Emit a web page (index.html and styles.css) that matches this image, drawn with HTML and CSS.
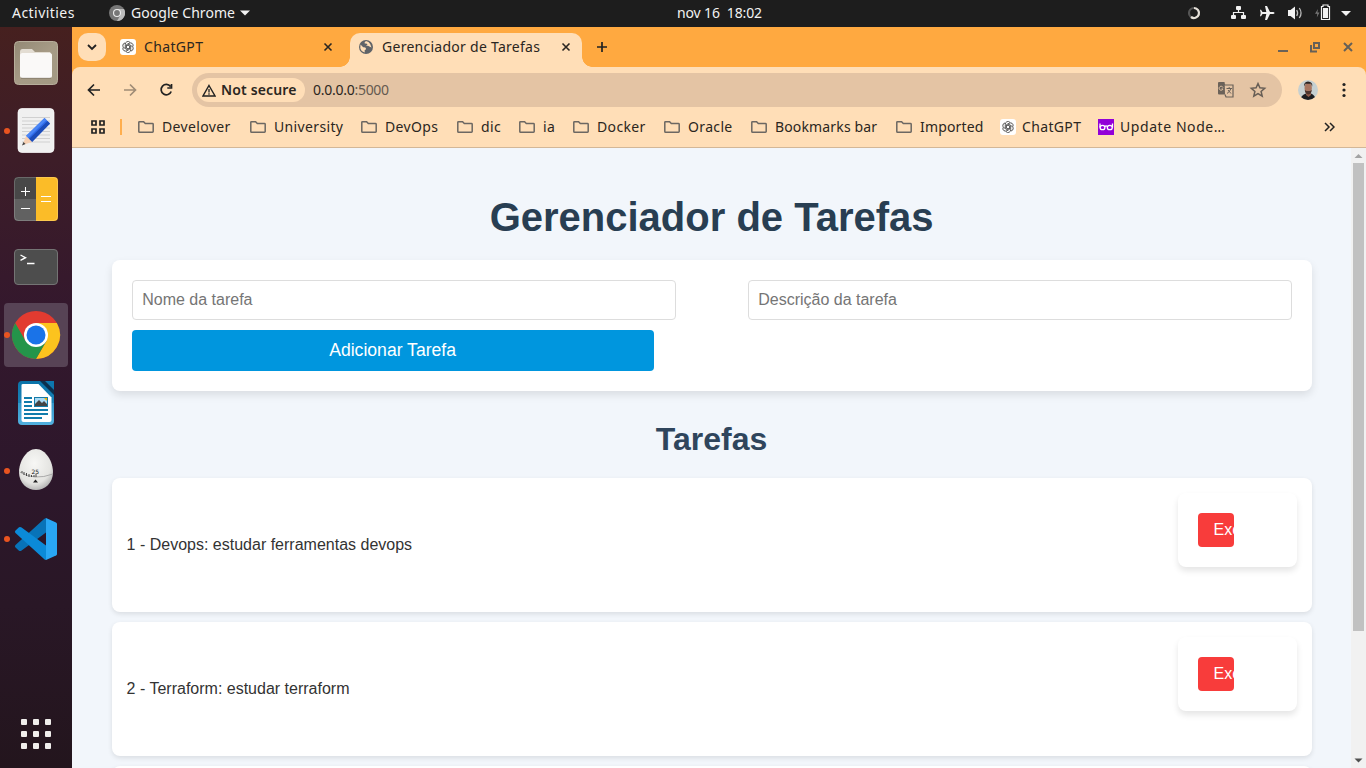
FILE: index.html
```html
<!DOCTYPE html>
<html lang="pt-BR">
<head>
<meta charset="utf-8">
<title>Gerenciador de Tarefas</title>
<link rel="stylesheet" href="styles.css">
</head>
<body>
<svg class="defs" width="0" height="0">
  <symbol id="folder" viewBox="0 0 16 14"><path d="M.8 11.4V2.4Q.8 1.7 1.5 1.7H5.6L7.3 3.5H14.4Q15.2 3.5 15.2 4.2V11.6Q15.2 12.3 14.5 12.3H1.6Q.8 12.3 .8 11.4Z" fill="none" stroke="#6c6762" stroke-width="1.5"/></symbol>
  <symbol id="gpt" viewBox="0 0 16 16"><rect width="16" height="16" rx="3" fill="#fff"/><g fill="none" stroke="#333" stroke-width=".75"><g id="petal"><path d="M8 6.1L10.7 7.6V10.8Q10.7 12.6 9 13.4Q7.3 14 6 12.6"/></g><use href="#petal" transform="rotate(60 8 8)"/><use href="#petal" transform="rotate(120 8 8)"/><use href="#petal" transform="rotate(180 8 8)"/><use href="#petal" transform="rotate(240 8 8)"/><use href="#petal" transform="rotate(300 8 8)"/></g></symbol>
  <symbol id="cross" viewBox="0 0 10 10"><path d="M1.5 1.5L8.5 8.5M8.500 1.500L1.500 8.500" stroke="currentColor" stroke-width="1.600"/></symbol>
</svg>

<header class="topbar">
  <span class="activities">Activities</span>
  <svg class="app-icon" width="16" height="16" viewBox="0 0 16 16"><circle cx="8" cy="8" r="8" fill="#777"/><path d="M8 4H15A8 8 0 0 1 8 16L11.5 10Z" fill="#bbb"/><circle cx="8" cy="8" r="4" fill="#eee"/><circle cx="8" cy="8" r="2.9" fill="#777"/></svg>
  <span class="app-name">Google Chrome</span>
  <svg class="app-caret" width="10" height="6"><path d="M0 .5H10L5 5.5Z" fill="#f2f2f2"/></svg>
  <span class="clock">nov 16&nbsp; 18:02</span>
  <svg class="tray" width="170" height="26" viewBox="1186 0 170 26" fill="#f2f2f2">
    <circle cx="1194" cy="13" r="5" fill="none" stroke="#555" stroke-width="2.2"/><path d="M1194 8A5 5 0 1 1 1191 17" fill="none" stroke="#e5e0d8" stroke-width="2.2"/>
    <rect x="1236" y="6" width="5" height="4" rx="1"/><rect x="1231" y="15" width="5" height="4" rx="1"/><rect x="1241" y="15" width="5" height="4" rx="1"/><path d="M1238.500 9V12.500M1233.500 15.500V12.500H1243.500V15.500" fill="none" stroke="#f2f2f2" stroke-width="1.200"/>
    <path d="M1265 6H1267L1270 12H1273Q1274.500 12.200 1274.500 13T1273 14H1270L1267 20H1265L1266.300 14H1262.500L1261 16.300H1260L1260.700 13L1260 9.700H1261L1262.500 12H1266.300Z"/>
    <path d="M1288 10H1290.500L1295 6.500V19.500L1290.500 16H1288Z"/><path d="M1296.700 10Q1298.500 13 1296.700 16M1299.300 8Q1302.800 13 1299.300 18" fill="none" stroke="#bbb" stroke-width="1.300"/>
    <path d="M1318 9L1315 13.800H1317.300L1316.800 17.500L1319.500 12.600H1317.400Z" fill="#777"/><path d="M1323 5H1328V6.500H1329.500V19.500H1321.500V6.500H1323Z" fill="none" stroke="#f2f2f2" stroke-width="1.200"/><rect x="1323" y="8" width="5" height="10"/>
    <path d="M1341 11H1351L1346 16Z"/>
  </svg>
</header>

<div class="desktop">
  <nav class="dock">
    <div class="launcher"><svg viewBox="0 0 64 64"><defs><linearGradient id="fg" x2="1" y2="1"><stop stop-color="#938975"/><stop offset=".5" stop-color="#a69b86"/><stop offset="1" stop-color="#a39983"/></linearGradient></defs><rect x="10.500" y="10.500" width="43" height="43" rx="4" fill="url(#fg)" stroke="#b7ae9b"/><path d="M16 30V21Q16 18 18.500 18H28L31 21H46L48 24V30Z" fill="#e3ddd3"/><rect x="16" y="22" width="32" height="25" rx="2.500" fill="#faf9f8"/><path d="M17 47.300H47" stroke="#7e7565" stroke-width=".7"/></svg></div>
    <div class="launcher"><i class="dot"></i><svg viewBox="0 0 64 64"><rect x="14" y="9.500" width="36" height="44" rx="4" fill="#f0f0f0" stroke="#fff" stroke-width=".7"/><path d="M18 18.500H46M18 22H46M18 25.500H46M18 29H46M18 32.500H46M18 36H46M18 39.500H46M18 43H46" stroke="#d0d0d0"/><path d="M40.500 19L46 24.500L28 43L22 37Z" fill="#2f6cea"/><path d="M43.500 22L46 24.500L28 43L25 40Z" fill="#1c4cb8"/><path d="M40.500 19L42.500 21L24 39L22 37Z" fill="#4b86f5"/><path d="M22 37L28 43L18.500 46Z" fill="#f6cfb2"/><path d="M19.500 43L18 46.500L21.500 45Z" fill="#444"/></svg></div>
    <div class="launcher"><svg viewBox="0 0 64 64"><defs><clipPath id="cc"><rect x="10" y="10" width="44" height="44" rx="4"/></clipPath></defs><g clip-path="url(#cc)"><path d="M10 10H32V32H10Z" fill="#484848"/><path d="M10 32H32V54H10Z" fill="#616161"/><path d="M32 10H54V54H32Z" fill="#fbbc28"/></g><rect x="10.500" y="10.500" width="43" height="43" rx="4" fill="none" stroke="#fff" opacity=".18"/><path d="M17 24.500H26M21.500 20V29M17 41.500H26M37 29.500H47M37 34.500H47" stroke="#fff"/></svg></div>
    <div class="launcher"><svg viewBox="0 0 64 64"><rect x="10.500" y="14.500" width="43" height="35" rx="3.500" fill="#4d4d4d" stroke="#747474"/><path d="M16.500 20L21.500 22.700L16.500 25.300M23 28.500H30.500" fill="none" stroke="#fff" stroke-width="1.400"/></svg></div>
    <div class="launcher active"><i class="dot"></i><svg viewBox="0 0 64 64"><circle cx="32" cy="32" r="24" fill="#e23b30"/><path d="M32 20H52.800A24 24 0 0 1 32 56L42.400 38Z" fill="#fcc31e"/><path d="M11.200 20A24 24 0 0 0 32 56L42.400 38L21.600 38Z" fill="#24954a"/><circle cx="32" cy="32" r="12" fill="#fff"/><circle cx="32" cy="32" r="9.500" fill="#1a73e8"/></svg></div>
    <div class="launcher"><svg viewBox="0 0 64 64"><defs><linearGradient id="wg" x2="0" y2="1"><stop stop-color="#0a72a8"/><stop offset=".5" stop-color="#1b83b8"/><stop offset=".5" stop-color="#3298ca"/><stop offset="1" stop-color="#52b0df"/></linearGradient></defs><path d="M14 14Q14 10 18 10H38L50 22V50Q50 54 46 54H18Q14 54 14 50Z" fill="url(#wg)"/><path d="M17.500 14Q17.500 13 19 13H34.500L47.500 26.500V49Q47.500 51 45.500 51H19.500Q17.500 51 17.500 49Z" fill="#fff"/><path d="M36 10H41L50 19V24Z" fill="#0b2f4d"/><path d="M41 10H50V19Z" fill="#0d77ae"/><path d="M20 27H28M20 31H28M20 35H28M20 39H44M20 43H44M20 47H38" stroke="#117cac" stroke-width="1.800"/><rect x="30.500" y="26.500" width="13" height="9" fill="#a9daf4" stroke="#167ba8"/><path d="M31 35V33L35 29L38 32L40 30L43 33V35Z" fill="#444"/><path d="M40 27H43V30Z" fill="#f2b400"/></svg></div>
    <div class="launcher"><i class="dot"></i><svg viewBox="0 0 64 64"><defs><radialGradient id="eg" cx=".45" cy=".35" r=".7"><stop stop-color="#f7f7f5"/><stop offset=".7" stop-color="#e4e4e1"/><stop offset="1" stop-color="#aaa"/></radialGradient></defs><path d="M32 10C42 10 49 23 49 33C49 44 41 51 32 51S15 44 15 33C15 23 22 10 32 10Z" fill="url(#eg)"/><path d="M15.500 33Q30 42 49 35" fill="none" stroke="#aaa"/><path d="M18 32V34M20 33V36M22.500 34V37M25 35V38M27.500 36V38M30 36V38M32 35V38" stroke="#222" stroke-width=".8"/><path d="M29 43.500L31.500 40.500L34 43.500Z" fill="#222"/><text x="27.500" y="35" class="egg-number">25</text></svg></div>
    <div class="launcher"><i class="dot"></i><svg viewBox="0 0 64 64"><path d="M11.500 38Q10.200 39.300 11.500 40.500L15 43.700Q16.300 44.500 17.600 43.500L42 25.500V11Q41 11 39.500 12.500Z" fill="#0873b8"/><path d="M11.500 26Q10.200 24.700 11.500 23.500L15 20.300Q16.300 19.500 17.600 20.500L42 38.500V53Q41 53 39.500 51.500Z" fill="#0b8ad8"/><path d="M42 11L52 15.500Q53 16 53 17V47Q53 48 52 48.500L42 53Z" fill="#29a7f4"/></svg></div>
    <div class="launcher apps"><svg viewBox="0 0 64 64" fill="#f0eeec"><rect x="17" y="17" width="6" height="6" rx="1"/><rect x="29" y="17" width="6" height="6" rx="1"/><rect x="41" y="17" width="6" height="6" rx="1"/><rect x="17" y="29" width="6" height="6" rx="1"/><rect x="29" y="29" width="6" height="6" rx="1"/><rect x="41" y="29" width="6" height="6" rx="1"/><rect x="17" y="41" width="6" height="6" rx="1"/><rect x="29" y="41" width="6" height="6" rx="1"/><rect x="41" y="41" width="6" height="6" rx="1"/></svg></div>
  </nav>

  <div class="browser">
    <div class="tabstrip">
      <div class="tab-search"><svg width="10" height="7"><path d="M1 1L5 5L9 1" fill="none" stroke="#222" stroke-width="1.800"/></svg></div>
      <div class="tab"><svg width="16" height="16"><use href="#gpt"/></svg><span class="t-chatgpt">ChatGPT</span><svg class="close" width="10" height="10"><use href="#cross"/></svg></div>
      <div class="tab current"><svg width="16" height="16" viewBox="0 0 16 16"><circle cx="8" cy="8" r="7" fill="#5f6368"/><path d="M2.500 5.500L5.200 8.300Q7.500 8 8 9.500Q8 11 6.700 11V13.500Q3 12.500 2.300 9ZM8 2Q6 3.200 6.700 4.500Q9 4 9.500 5.500L8 6.800H10Q12 8 13.500 8.500Q13 5 10.500 3Z" fill="#ffdeb7"/></svg><span class="t-current">Gerenciador de Tarefas</span><svg class="close" width="10" height="10"><use href="#cross"/></svg></div>
      <svg class="new-tab" width="12" height="12"><path d="M6 1V11M1 6H11" stroke="#222" stroke-width="1.700"/></svg>
      <svg class="window-controls" width="78" height="16" viewBox="0 0 78 16"><path d="M1 12H11" stroke="#6b6257" stroke-width="2"/><path d="M37 4H42V9H37ZM34 6V12.500H40" fill="none" stroke="#666057" stroke-width="2"/><path d="M67 4L75 12M75 4L67 12" stroke="#666057" stroke-width="2"/></svg>
    </div>
    <div class="chrome">
      <div class="toolbar">
        <svg class="nav-icons" width="90" height="16" viewBox="0 0 90 16" fill="none" stroke-width="1.700"><path d="M13 8H2M7 2.500L1.500 8L7 13.500" stroke="#222"/><path d="M37 8H48M43 2.500L48.500 8L43 13.500" stroke="#a08c76"/><path d="M83.500 4.500A5.200 5.200 0 1 0 84.200 9.500M84.500 2V6H80.300" stroke="#222"/></svg>
        <div class="address">
          <div class="security"><svg width="14" height="13" viewBox="0 0 14 13"><path d="M7 1.500L13 12H1Z" fill="none" stroke="#222" stroke-width="1.400"/><path d="M7 5V8.500M7 9.300V10.700" stroke="#222" stroke-width="1.300"/></svg><span>Not secure</span></div>
          <span class="url">0.0.0.0<span class="port">:5000</span></span>
          <svg class="address-icons" width="52" height="18" viewBox="0 0 52 18"><path d="M2 1H7.500L10 13.500H2Q1 13.500 1 12.500V2Q1 1 2 1Z" fill="#6b6259"/><path d="M7.800 4H16V16H9L8 13.500" fill="#e4c4a4" stroke="#6b6259" stroke-width="1.200"/><path d="M6 6.500A2 2 0 1 0 6 8H4.500" fill="none" stroke="#e4c4a4"/><path d="M9.500 7.500H15M12.200 6V7.500M14 7.500Q13 10.500 10 12.500M11 9L14 12.500" fill="none" stroke="#6b6259"/><path d="M41 2.500L42.900 6.800L47.700 7.300L44.100 10.400L45.200 15.100L41 12.600L36.800 15.100L37.900 10.400L34.300 7.300L39.100 6.800Z" fill="none" stroke="#675e55" stroke-width="1.500"/></svg>
        </div>
        <svg class="avatar" width="20" height="20" viewBox="0 0 20 20"><defs><clipPath id="ac"><circle cx="10" cy="10" r="10"/></clipPath></defs><g clip-path="url(#ac)"><path d="M0 0H20V20H0Z" fill="#c6d0d1"/><path d="M2 20Q3 15 8 13.500H13Q17 15 18 20Z" fill="#1d1d20"/><path d="M8 12H13V15L10.500 17L8 15Z" fill="#8e5c49"/><ellipse cx="10.200" cy="8" rx="3.700" ry="5.500" fill="#a87660"/><path d="M6.200 6.500Q5.500 2 10 1.500Q15 2 14.200 6.500L13 3.800H7.500Z" fill="#2b2423"/><path d="M6.800 10L8.500 11H12L13.800 10Q13.500 14 10.300 14.500Q7 14 6.800 10Z" fill="#4e352d"/></g></svg>
        <svg class="menu" width="4" height="16" fill="#222"><circle cx="2" cy="2.500" r="1.600"/><circle cx="2" cy="8" r="1.600"/><circle cx="2" cy="13.500" r="1.600"/></svg>
      </div>
      <div class="bookmarks">
        <svg width="14" height="14" fill="none" stroke="#222" stroke-width="1.700"><path d="M1 1H5V5H1ZM9 1H13V5H9ZM1 9H5V13H1ZM9 9H13V13H9Z"/></svg>
        <span class="divider"></span>
        <div class="bookmark-list">
          <span class="bm"><svg width="16" height="14"><use href="#folder"/></svg><b>Develover</b></span>
          <span class="bm"><svg width="16" height="14"><use href="#folder"/></svg><b>University</b></span>
          <span class="bm"><svg width="16" height="14"><use href="#folder"/></svg><b>DevOps</b></span>
          <span class="bm"><svg width="16" height="14"><use href="#folder"/></svg><b>dic</b></span>
          <span class="bm"><svg width="16" height="14"><use href="#folder"/></svg><b>ia</b></span>
          <span class="bm"><svg width="16" height="14"><use href="#folder"/></svg><b>Docker</b></span>
          <span class="bm"><svg width="16" height="14"><use href="#folder"/></svg><b>Oracle</b></span>
          <span class="bm tight"><svg width="16" height="14"><use href="#folder"/></svg><b>Bookmarks bar</b></span>
          <span class="bm tight"><svg width="16" height="14"><use href="#folder"/></svg><b>Imported</b></span>
          <span class="bm site"><svg width="16" height="16"><use href="#gpt"/></svg><b>ChatGPT</b></span>
          <span class="bm site wide"><svg width="16" height="16" viewBox="0 0 16 16"><path d="M0 0H16V16H0Z" fill="#9200d8"/><path d="M2 4.500V8.500M14.500 4.500V8.500" stroke="#fff" stroke-width="1.300"/><ellipse cx="4.500" cy="8.500" rx="2.400" ry="2.200" fill="none" stroke="#fff" stroke-width="1.300"/><ellipse cx="11.800" cy="8.500" rx="2.500" ry="2.200" fill="none" stroke="#fff" stroke-width="1.300"/><path d="M6.700 7.500Q8 6.300 9.500 7.500" fill="none" stroke="#fff" stroke-width="1.300"/></svg><b>Update Node…</b></span>
        </div>
        <svg class="more" width="11" height="10" fill="none" stroke="#222" stroke-width="1.500"><path d="M1 1L5 5L1 9M6 1L10 5L6 9"/></svg>
      </div>
    </div>

    <div class="viewport">
      <main class="page">
        <h1>Gerenciador de Tarefas</h1>
        <form class="card task-form">
          <input type="text" placeholder="Nome da tarefa">
          <input type="text" placeholder="Descrição da tarefa">
          <button type="button" class="add">Adicionar Tarefa</button>
        </form>
        <h2>Tarefas</h2>
        <ul class="tasks">
          <li class="task"><span>1 - Devops: estudar ferramentas devops</span><form class="card remove-form"><button type="button" class="remove">Excluir</button></form></li>
          <li class="task"><span>2 - Terraform: estudar terraform</span><form class="card remove-form"><button type="button" class="remove">Excluir</button></form></li>
          <li class="task"></li>
        </ul>
      </main>
      <div class="scrollbar"><svg width="15" height="15"><path d="M3.500 10H11.500L7.500 6Z" fill="#a3a3a3"/></svg><div class="thumb"></div><svg width="15" height="15"><path d="M3.500 5.500H11.500L7.500 9.500Z" fill="#505050"/></svg></div>
    </div>
  </div>
</div>
</body>
</html>
```
FILE: styles.css
```css
* { box-sizing: border-box; }
body { margin: 0; width: 1366px; height: 768px; overflow: hidden; display: flex; flex-direction: column; font: 14px/20px "Noto Sans", sans-serif; color: #2b2621; }
svg { display: block; flex: none; }
.defs { position: absolute; }
.topbar { height: 27px; flex: none; background: #1d1d1d; color: #f2f2f2; display: flex; align-items: center; padding: 0 10px 1px 12px; white-space: nowrap; }
.activities { width: 97px; letter-spacing: .45px; }
.app-name { margin-left: 6px; width: 109px; letter-spacing: .05px; }
.app-icon { flex: none; }
.clock { margin-left: 427px; width: 86px; letter-spacing: -.13px; }
.tray { margin-left: auto; }

.desktop { display: flex; flex: 1; min-height: 0; }
.dock { width: 72px; flex: none; padding: 4px; display: flex; flex-direction: column; gap: 4px; background: linear-gradient(#46201f 0%, #3d1d28 18%, #34182d 38%, #2d172b 60%, #291726 78%, #23151d 100%); }
.launcher { position: relative; width: 64px; height: 64px; flex: none; border-radius: 4px; }
.launcher svg { width: 64px; height: 64px; }
.launcher.active { background: #574355; }
.dot { position: absolute; left: 0; top: 29px; width: 6px; height: 6px; border-radius: 50%; background: #e95420; }
.apps { margin-top: auto; margin-bottom: -2px; }
.egg-number { font: 6px "DejaVu Sans", sans-serif; fill: #222; }

.browser { flex: 1; min-width: 0; display: flex; flex-direction: column; background: #ffa940; }
.tabstrip { height: 40px; flex: none; display: flex; align-items: center; padding-left: 6px; }
.tab-search { width: 28px; height: 28px; border-radius: 10px; background: #ffdeb7; display: flex; align-items: center; justify-content: center; }
.tab { width: 230px; margin-left: 6px; padding: 0 9px 0 8px; height: 34px; display: flex; align-items: center; gap: 8px; white-space: nowrap; }
.tab .close { margin-left: auto; }
.t-chatgpt { letter-spacing: .35px; }
.t-current { letter-spacing: .27px; }
.tab.current { position: relative; width: 232px; height: 34px; margin: 6px 0 0 8px; padding: 0 11px 6px 8px; border-radius: 10px 10px 0 0; background: #ffdeb7; }
.tab.current::before, .tab.current::after { content: ""; position: absolute; bottom: 0; width: 10px; height: 10px; }
.tab.current::before { left: -10px; background: radial-gradient(circle at 0 0, transparent 9.5px, #ffdeb7 10px); }
.tab.current::after { right: -10px; background: radial-gradient(circle at 100% 0, transparent 9.5px, #ffdeb7 10px); }
.new-tab { margin-left: 14px; }
.window-controls { margin-left: auto; margin-right: 11px; }

.chrome { height: 81px; flex: none; background: #ffdeb7; border-radius: 8px 8px 0 0; border-bottom: 1px solid #d3b797; padding-top: 6px; }
.toolbar { height: 34px; display: flex; align-items: center; padding-left: 15px; }
.address { width: 1090px; height: 34px; margin-left: 15px; border-radius: 17px; background: #e4c4a4; display: flex; align-items: center; padding: 0 13px 0 5px; }
.security { width: 108px; height: 24px; border-radius: 12px; background: #ffdeb7; display: flex; align-items: center; gap: 5px; padding-left: 5px; font-weight: 600; letter-spacing: .15px; white-space: nowrap; }
.url { margin-left: 8px; letter-spacing: -.27px; }
.port { color: #655a50; }
.address-icons { margin-left: auto; }
.avatar { margin-left: 16px; }
.menu { margin-left: 24px; }
.bookmarks { height: 40px; display: flex; align-items: center; padding-left: 19px; }
.divider { width: 2px; height: 16px; margin: 0 16px 0 15px; background: #ffae4d; }
.bookmark-list { display: grid; grid-template-columns: 112px 111px 96px 62px 54px 91px 87px 145px 104px 98px 130px; }
.bm { display: flex; align-items: center; gap: 8px; white-space: nowrap; letter-spacing: .35px; }
.bm.site { gap: 6px; }
.bm.tight { letter-spacing: .15px; }
.bm.wide { letter-spacing: .57px; }
.bm b { font-weight: 400; }
.more { margin-left: 96px; }

.viewport { flex: 1; min-height: 0; display: flex; background: #f2f6fb; font-family: "Liberation Sans", Arial, sans-serif; }
.page { flex: 1; min-width: 0; padding: 40px 39.400px 0 39.600px; overflow: hidden; color: #333; }
h1 { margin: 6px 0 20px; font-size: 40px; line-height: 46px; text-align: center; color: #283e52; }
h2 { margin: 30px 0 20px; font-size: 32px; line-height: 37px; text-align: center; color: #2f455c; }
.card { background: #fff; border-radius: 8px; padding: 20px; box-shadow: 0 4px 8px rgba(0, 0, 0, .1); }
.task-form { height: 131px; display: flex; flex-wrap: wrap; justify-content: space-between; gap: 10px 0; align-content: flex-start; }
input { width: 544px; height: 40px; border: 1px solid #ddd; border-radius: 4px; padding: 0 9.600px; font: 16px "Liberation Sans", Arial, sans-serif; }
input::placeholder { color: #757575; }
button { border: 0; border-radius: 4px; color: #fff; font-family: "Liberation Sans", Arial, sans-serif; }
.add { width: 522px; height: 41px; background: #0096de; font-size: 17.600px; }
.tasks { list-style: none; margin: 0; padding: 0; display: flex; flex-direction: column; gap: 10px; }
.task { height: 134px; display: flex; justify-content: space-between; align-items: center; padding: 15px; border-radius: 8px; background: #fff; box-shadow: 0 2px 5px rgba(0, 0, 0, .1); font-size: 16px; }
.remove-form { align-self: flex-start; width: 119px; height: 74px; box-shadow: 0 4px 6px rgba(0, 0, 0, .1); }
.remove { display: block; width: 36px; height: 34px; padding: 0 0 0 16px; overflow: hidden; background: #f83c3b; font-size: 16px; text-align: left; white-space: nowrap; }
.scrollbar { width: 15px; flex: none; background: #f1f1f1; display: flex; flex-direction: column; align-items: center; }
.thumb { width: 11px; height: 468px; background: #c1c1c1; margin-bottom: auto; }
```
